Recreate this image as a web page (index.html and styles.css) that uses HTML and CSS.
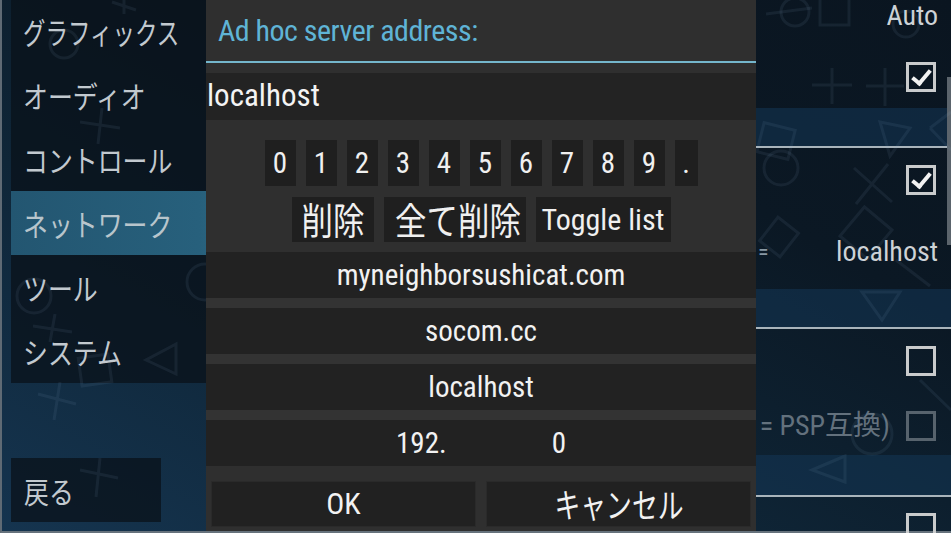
FILE: index.html
```html
<!DOCTYPE html>
<html lang="ja">

<head>
  <meta charset="utf-8">
  <title>ネットワーク設定</title>
  <meta name="viewport" content="width=device-width, initial-scale=1.0">
  <link rel="stylesheet" href="styles.css">
</head>

<body>
  <div class="screen">
    <div class="sidebar">
      <div class="tabs">
        <div class="tab"><span class="jp tight">グラフィックス</span></div>
        <div class="tab"><span class="jp">オーディオ</span></div>
        <div class="tab"><span class="jp">コントロール</span></div>
        <div class="tab active"><span class="jp">ネットワーク</span></div>
        <div class="tab"><span class="jp">ツール</span></div>
        <div class="tab"><span class="jp">システム</span></div>
      </div>
      <div class="back"><span class="jp">戻る</span></div>
    </div>

    <div class="settings">
      <div class="row row-top"><span class="value">Auto</span></div>
      <div class="row row-check"><span class="check on"></span></div>
      <div class="strip"></div>
      <div class="rule"></div>
      <div class="row row-check2"><span class="check on"></span></div>
      <div class="row row-text"><span class="label">=</span><span class="value">localhost</span></div>
      <div class="strip"></div>
      <div class="rule"></div>
      <div class="row row-check3"><span class="check"></span></div>
      <div class="row row-dim"><span class="dim-label">(0 = PSP互換)</span><span class="check dim"></span></div>
      <div class="strip strip-last"></div>
      <div class="rule"></div>
      <div class="row row-check4"><span class="check"></span></div>
    </div>

    <div class="scrollbar"></div>

    <svg class="symbols" width="951" height="533" viewBox="0 0 951 533">
      <g fill="none" stroke="rgba(140,180,210,0.09)" stroke-width="3">
        <path d="M112 2 L136 10 M124 -6 L124 14" />
        <circle cx="64" cy="44" r="14" />
        <path d="M80 122 L120 128 M102 108 L98 144" />
        <circle cx="34" cy="296" r="17" />
        <path d="M33 326 L72 332 M55 314 L50 342" />
        <path d="M176 344 L146 360 L176 374 Z" />
        <rect x="80" y="356" width="30" height="28" transform="rotate(-8 95 370)" />
        <circle cx="205" cy="282" r="18" />
        <path d="M38 394 L76 404 M60 382 L54 420" />
        <path d="M80 470 L118 478 M100 458 L96 497" />
        <circle cx="795" cy="12" r="14" />
        <path d="M766 14 L812 8" />
        <rect x="820" y="-2" width="29" height="27" />
        <circle cx="906" cy="24" r="13" />
        <path d="M812 85 L852 85 M832 68 L832 104" />
        <path d="M866 86 L904 86 M885 68 L885 106" />
        <rect x="760" y="126" width="32" height="30" transform="rotate(14 776 141)" />
        <path d="M880 122 L910 128 L890 156 Z" />
        <path d="M930 128 L951 112 M930 128 L951 150" />
        <circle cx="781" cy="168" r="17" />
        <path d="M854 168 L892 202 M888 164 L856 204" />
        <rect x="766" y="222" width="26" height="30" transform="rotate(38 779 237)" />
        <rect x="848" y="214" width="36" height="38" transform="rotate(40 866 233)" />
        <path d="M862 292 L900 292 L882 320 Z" />
        <path d="M896 260 L930 286" />
        <circle cx="872" cy="434" r="20" />
        <path d="M845 456 L812 470 L845 482 Z" />
        <path d="M920 380 L951 410" />
      </g>
    </svg>

    <div class="dialog">
      <div class="dlg-title">Ad hoc server address:</div>
      <div class="dlg-line"></div>
      <div class="dlg-input">localhost</div>

      <div class="keys">
        <span class="key">0</span>
        <span class="key">1</span>
        <span class="key">2</span>
        <span class="key">3</span>
        <span class="key">4</span>
        <span class="key">5</span>
        <span class="key">6</span>
        <span class="key">7</span>
        <span class="key">8</span>
        <span class="key">9</span>
        <span class="key key-dot">.</span>
      </div>

      <div class="keys keys-edit">
        <span class="key key-del"><span class="jp">削除</span></span>
        <span class="key key-clear"><span class="jp">全て削除</span></span>
        <span class="key key-toggle">Toggle list</span>
      </div>

      <div class="hosts">
        <div class="host">myneighborsushicat.com</div>
        <div class="host">socom.cc</div>
        <div class="host">localhost</div>
        <div class="host host-split"><span>192.</span><span>0</span></div>
      </div>

      <div class="buttons">
        <div class="btn">OK</div>
        <div class="btn"><span class="jp">キャンセル</span></div>
      </div>
    </div>
  </div>
</body>

</html>
```

FILE: styles.css
```css
* {
  box-sizing: border-box;
}

body {
  margin: 0;
  width: 951px;
  height: 533px;
  overflow: hidden;
  background: #0c1822;
  font-family: "Roboto Condensed", "Liberation Sans Narrow", "DejaVu Sans Condensed", Roboto, "Noto Sans CJK JP", sans-serif;
  color: #ffffff;
}

.screen {
  position: relative;
  display: flex;
  width: 951px;
  height: 533px;
  background: linear-gradient(to top right, #15344f 0%, #0f2638 35%, #0b1824 70%, #0a1520 100%);
  border-left: 2px solid #5f6a74;
  border-bottom: 2px solid #66727c;
}

/* the app squeezes japanese labels sideways */
.jp {
  display: inline-block;
  font-family: "Noto Sans CJK JP", sans-serif;
  white-space: nowrap;
  transform: scaleX(0.83);
}

/* left column */
.sidebar {
  flex-shrink: 0;
  width: 204px;
  padding-left: 9px;
  display: flex;
  flex-direction: column;
  justify-content: space-between;
}

.tabs {
  margin-top: -1px;
  margin-right: -40px;
  background-color: rgba(9, 17, 26, 0.75);
}

.tab {
  height: 64px;
  padding-left: 12px;
  font-size: 30px;
  line-height: 64px;
  color: #c2c9cf;
}

.tab .jp,
.back .jp {
  transform-origin: left center;
}

.tab .jp.tight {
  transform: scaleX(0.75);
}

.tab.active {
  background: linear-gradient(to right, #235671, #27607c 80%, #2f6c88);
  color: #b8c5cc;
}

.back {
  width: 150px;
  height: 64px;
  margin-bottom: 9px;
  padding-left: 13px;
  background-color: rgba(9, 17, 26, 0.75);
  font-size: 30px;
  line-height: 64px;
  color: #c2c9cf;
}

/* right column, mostly under the dialog */
.settings {
  flex: 1;
  min-width: 0;
  display: flex;
  flex-direction: column;
  padding-left: 550px;
}

.row {
  display: flex;
  align-items: flex-start;
  justify-content: flex-end;
  padding-right: 15px;
}

.row-top {
  height: 50px;
  padding-right: 13px;
}

.row-top .value {
  line-height: 33px;
  margin-top: -1px;
}

.row-check {
  height: 59px;
  padding-top: 12px;
}

.row-check2 {
  height: 66px;
  padding-top: 17px;
}

.row-text {
  height: 76px;
  align-items: center;
  justify-content: space-between;
  padding-right: 13px;
}

.row-check3 {
  height: 65px;
  padding-top: 17px;
}

.row-dim {
  height: 62px;
  padding-top: 17px;
}

.row-check4 {
  height: 34px;
  padding-top: 16px;
}

.value {
  font-size: 28px;
  color: #cdd2d6;
}

.label {
  font-size: 22px;
  color: #8998a4;
  margin-left: 2px;
}

.dim-label {
  flex-shrink: 0;
  white-space: nowrap;
  font-size: 28px;
  line-height: 30px;
  color: #63717d;
  margin-right: 16px;
}

.strip {
  height: 38px;
  background-color: rgba(20, 55, 85, 0.55);
}

.strip-last {
  height: 40px;
}

.rule {
  height: 2px;
  background-color: #a9b4bb;
}

.check {
  position: relative;
  flex-shrink: 0;
  width: 30px;
  height: 30px;
  border: 3px solid #c9cbcc;
}

.check.on::after {
  content: "";
  position: absolute;
  left: 7px;
  top: 1px;
  width: 7px;
  height: 15px;
  border-right: 4px solid #f2f2f2;
  border-bottom: 4px solid #f2f2f2;
  transform: rotate(40deg);
}

.check.dim {
  border-color: #57636d;
}

.scrollbar {
  position: absolute;
  right: 0;
  top: 77px;
  width: 4px;
  height: 168px;
  background-color: #5b646c;
}

.symbols {
  position: absolute;
  left: -2px;
  top: 0;
  pointer-events: none;
}

/* dialog */
.dialog {
  position: absolute;
  left: 204px;
  top: 0;
  width: 550px;
  height: 531px;
  background-color: #2f2f2f;
  display: flex;
  flex-direction: column;
}

.dlg-title {
  height: 61px;
  padding-left: 12px;
  font-size: 30px;
  letter-spacing: -0.5px;
  line-height: 62px;
  color: #5fb4d6;
}

.dlg-line {
  height: 2px;
  background-color: #74b6cc;
}

.dlg-input {
  height: 47px;
  margin-top: 10px;
  padding-left: 1px;
  background-color: #232323;
  font-size: 31px;
  line-height: 46px;
  color: #f4f4f4;
}

.keys {
  display: flex;
  justify-content: center;
  gap: 10px;
  margin-top: 20px;
}

.key {
  width: 31px;
  height: 46px;
  background-color: #1f1f1f;
  font-size: 29px;
  line-height: 46px;
  text-align: center;
  color: #f0f0f0;
}

.key-dot {
  width: 23px;
}

.keys-edit {
  margin-top: 11px;
}

.keys-edit .key {
  height: 45px;
  font-size: 30px;
  line-height: 45px;
  white-space: nowrap;
}

.keys-edit .jp {
  font-size: 37px;
  transform: scaleX(0.85);
}

.key-del {
  width: 82px;
}

.key.key-clear {
  width: 142px;
}

.key.key-toggle {
  width: 135px;
}

.hosts {
  display: flex;
  flex-direction: column;
  gap: 10px;
  margin-top: 10px;
  background-color: #333333;
}

.host {
  height: 46px;
  background-color: #222222;
  font-size: 29px;
  line-height: 46px;
  text-align: center;
  color: #f2f2f2;
}

.host-split {
  display: flex;
  justify-content: center;
  gap: 105px;
}

.buttons {
  display: flex;
  gap: 10px;
  margin-top: 15px;
  padding: 0 5px;
}

.btn {
  flex: 1;
  height: 46px;
  background-color: #212121;
  border: 1px solid #2a2a2a;
  font-size: 30px;
  line-height: 44px;
  text-align: center;
  color: #f2f2f2;
}

.btn .jp {
  font-size: 34px;
  transform: scaleX(0.76);
}
```
